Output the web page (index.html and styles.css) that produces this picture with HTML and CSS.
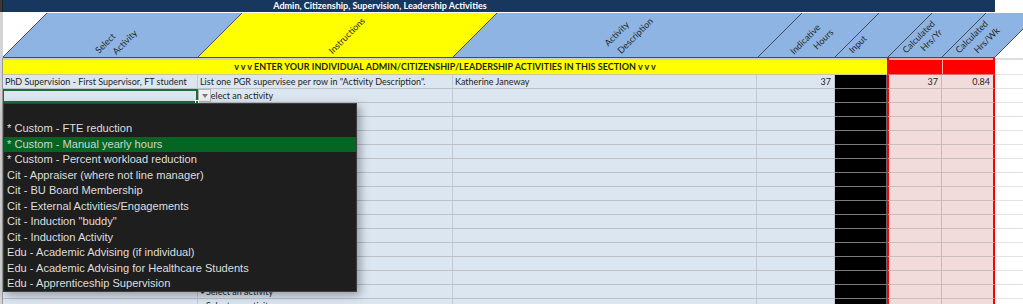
FILE: index.html
```html
<!DOCTYPE html>
<html>
<head>
<meta charset="utf-8">
<link rel="stylesheet" href="styles.css">
</head>
<body>
<div class="sheet">
  <div class="titlebar">
    <div class="gut dark"></div>
    <div class="title">Admin, Citizenship, Supervision, Leadership Activities</div>
    <div class="title-rest"></div>
    <div class="blank"></div>
  </div>

  <svg class="header" width="1023" height="46" viewBox="0 0 1023 46">
    <rect class="gutfill" x="0" y="0" width="3" height="46"/>
    <polygon class="blue" points="3,45 198,45 242,1 47,1"/>
    <polygon class="yellow" points="198,45 453,45 497,1 242,1"/>
    <polygon class="blue" points="453,45 995,45 1039,1 497,1"/>
    <line class="edge" x1="3" y1="45" x2="47" y2="1"/>
    <line class="edge" x1="198" y1="45" x2="242" y2="1"/>
    <line class="edge" x1="453" y1="45" x2="497" y2="1"/>
    <line class="edge" x1="758" y1="45" x2="802" y2="1"/>
    <line class="edge" x1="835" y1="45" x2="879" y2="1"/>
    <line class="edge" x1="888" y1="45" x2="932" y2="1"/>
    <line class="edge" x1="942" y1="45" x2="986" y2="1"/>
    <line class="edge" x1="995" y1="45" x2="1039" y2="1"/>
    <line class="base" x1="3" y1="45.5" x2="995" y2="45.5"/>
    <text class="ht" x="105" y="31" transform="rotate(-45 105 31)">Select</text>
    <text class="ht" x="124.5" y="30" transform="rotate(-45 124.5 30)">Activity</text>
    <text class="ht" x="346.5" y="23.5" transform="rotate(-45 346.5 23.5)">Instructions</text>
    <text class="ht" x="616.5" y="21.5" transform="rotate(-45 616.5 21.5)">Activity</text>
    <text class="ht" x="635" y="23.5" transform="rotate(-45 635 23.5)">Description</text>
    <text class="ht" x="805" y="27" transform="rotate(-45 805 27)">Indicative</text>
    <text class="ht" x="823" y="27" transform="rotate(-45 823 27)">Hours</text>
    <text class="ht" x="857.5" y="32" transform="rotate(-45 857.5 32)">Input</text>
    <text class="ht" x="918.5" y="24.5" transform="rotate(-45 918.5 24.5)">Calculated</text>
    <text class="ht" x="931" y="28" transform="rotate(-45 931 28)">Hrs/Yr</text>
    <text class="ht" x="971.5" y="24.5" transform="rotate(-45 971.5 24.5)">Calculated</text>
    <text class="ht" x="986.5" y="28" transform="rotate(-45 986.5 28)">Hrs/Wk</text>
  </svg>

  <div class="sep">
    <div class="gut"></div>
    <div class="sep-main"></div>
    <div class="sep-red f"></div>
    <div class="sep-red g"></div>
    <div class="sep-w"></div>
  </div>

  <div class="banner">
    <div class="gut"></div>
    <div class="banner-text">v v v ENTER YOUR INDIVIDUAL ADMIN/CITIZENSHIP/LEADERSHIP ACTIVITIES IN THIS SECTION v v v</div>
    <div class="redcell f"></div>
    <div class="redcell g gr"></div>
    <div class="w"></div>
  </div>

  <div class="row">
    <div class="gut"></div>
    <div class="c">PhD Supervision - First Supervisor, FT student</div>
    <div class="c">List one PGR supervisee per row in "Activity Description".</div>
    <div class="c">Katherine Janeway</div>
    <div class="c num">37</div>
    <div class="c e"></div>
    <div class="c p f num">37</div>
    <div class="c p g num">0.84</div>
    <div class="w"></div>
  </div>

  <div class="row">
    <div class="gut"></div>
    <div class="c sel"><span class="handle"></span></div>
    <div class="c bcol"><span class="ddbtn"><span class="tri"></span></span><span class="bul">•</span>Select an activity</div>
    <div class="c"></div>
    <div class="c"></div>
    <div class="c e"></div>
    <div class="c p f"></div>
    <div class="c p g"></div>
    <div class="w"></div>
  </div>

  <div class="row"><div class="gut"></div><div class="c"></div><div class="c"><span class="bul">•</span>Select an activity</div><div class="c"></div><div class="c"></div><div class="c e"></div><div class="c p f"></div><div class="c p g"></div><div class="w"></div></div>
  <div class="row"><div class="gut"></div><div class="c"></div><div class="c"><span class="bul">•</span>Select an activity</div><div class="c"></div><div class="c"></div><div class="c e"></div><div class="c p f"></div><div class="c p g"></div><div class="w"></div></div>
  <div class="row"><div class="gut"></div><div class="c"></div><div class="c"><span class="bul">•</span>Select an activity</div><div class="c"></div><div class="c"></div><div class="c e"></div><div class="c p f"></div><div class="c p g"></div><div class="w"></div></div>
  <div class="row"><div class="gut"></div><div class="c"></div><div class="c"><span class="bul">•</span>Select an activity</div><div class="c"></div><div class="c"></div><div class="c e"></div><div class="c p f"></div><div class="c p g"></div><div class="w"></div></div>
  <div class="row"><div class="gut"></div><div class="c"></div><div class="c"><span class="bul">•</span>Select an activity</div><div class="c"></div><div class="c"></div><div class="c e"></div><div class="c p f"></div><div class="c p g"></div><div class="w"></div></div>
  <div class="row"><div class="gut"></div><div class="c"></div><div class="c"><span class="bul">•</span>Select an activity</div><div class="c"></div><div class="c"></div><div class="c e"></div><div class="c p f"></div><div class="c p g"></div><div class="w"></div></div>
  <div class="row"><div class="gut"></div><div class="c"></div><div class="c"><span class="bul">•</span>Select an activity</div><div class="c"></div><div class="c"></div><div class="c e"></div><div class="c p f"></div><div class="c p g"></div><div class="w"></div></div>
  <div class="row"><div class="gut"></div><div class="c"></div><div class="c"><span class="bul">•</span>Select an activity</div><div class="c"></div><div class="c"></div><div class="c e"></div><div class="c p f"></div><div class="c p g"></div><div class="w"></div></div>
  <div class="row"><div class="gut"></div><div class="c"></div><div class="c"><span class="bul">•</span>Select an activity</div><div class="c"></div><div class="c"></div><div class="c e"></div><div class="c p f"></div><div class="c p g"></div><div class="w"></div></div>
  <div class="row"><div class="gut"></div><div class="c"></div><div class="c"><span class="bul">•</span>Select an activity</div><div class="c"></div><div class="c"></div><div class="c e"></div><div class="c p f"></div><div class="c p g"></div><div class="w"></div></div>
  <div class="row"><div class="gut"></div><div class="c"></div><div class="c"><span class="bul">•</span>Select an activity</div><div class="c"></div><div class="c"></div><div class="c e"></div><div class="c p f"></div><div class="c p g"></div><div class="w"></div></div>
  <div class="row"><div class="gut"></div><div class="c"></div><div class="c"><span class="bul">•</span>Select an activity</div><div class="c"></div><div class="c"></div><div class="c e"></div><div class="c p f"></div><div class="c p g"></div><div class="w"></div></div>
  <div class="row"><div class="gut"></div><div class="c"></div><div class="c"><span class="bul">•</span>Select an activity</div><div class="c"></div><div class="c"></div><div class="c e"></div><div class="c p f"></div><div class="c p g"></div><div class="w"></div></div>
  <div class="row"><div class="gut"></div><div class="c"></div><div class="c"><span class="bul">•</span>Select an activity</div><div class="c"></div><div class="c"></div><div class="c e"></div><div class="c p f"></div><div class="c p g"></div><div class="w"></div></div>
  <div class="row"><div class="gut"></div><div class="c"></div><div class="c"><span class="bul">•</span>Select an activity</div><div class="c"></div><div class="c"></div><div class="c e"></div><div class="c p f"></div><div class="c p g"></div><div class="w"></div></div>

  <ul class="dropdown">
    <li>* Custom - FTE reduction</li>
    <li class="hl">* Custom - Manual yearly hours</li>
    <li>* Custom - Percent workload reduction</li>
    <li>Cit - Appraiser (where not line manager)</li>
    <li>Cit - BU Board Membership</li>
    <li>Cit - External Activities/Engagements</li>
    <li>Cit - Induction "buddy"</li>
    <li>Cit - Induction Activity</li>
    <li>Edu - Academic Advising (if individual)</li>
    <li>Edu - Academic Advising for Healthcare Students</li>
    <li>Edu - Apprenticeship Supervision</li>
  </ul>
</div>
</body>
</html>
```

FILE: styles.css
```css
* { box-sizing: border-box; }
html, body { margin: 0; padding: 0; background: #fff; }
body { width: 1023px; height: 304px; overflow: hidden; }

.sheet {
  position: relative;
  width: 1023px;
  height: 304px;
  overflow: hidden;
  font-family: Lato, "Liberation Sans", sans-serif;
}

.titlebar, .sep, .banner, .row {
  display: grid;
  grid-template-columns: 3px 195px 255px 304px 78px 52px 55px 53px 28px;
}

.gut { background: #d4d4d4; border-right: 1px solid #9a9a9a; }
.gut.dark { background: #3a3a3a; border-right: 1px solid #222; }

.titlebar { height: 12px; }
.title {
  grid-column: 2 / 5;
  background: #17375e;
  color: #fff;
  font-weight: 700;
  font-size: 9px;
  line-height: 12px;
  text-align: center;
  white-space: nowrap;
}
.title-rest { grid-column: 5 / 9; background: #17375e; }
.blank { background: #fff; }

.header { display: block; }
.gutfill { fill: #d4d4d4; }
.blue { fill: #8db4e2; }
.yellow { fill: #ffff00; }
.edge { stroke: #3d3d3d; stroke-width: 0.9; }
.base { stroke: #4a4a4a; stroke-width: 1; }
.ht {
  font-family: Lato, "Liberation Sans", sans-serif;
  font-size: 9px;
  fill: #262626;
  text-anchor: middle;
  dominant-baseline: central;
}

.sep { height: 2px; }
.sep-main { grid-column: 2 / 7; background: #cfcfcf; }
.sep-red { background: #f0a7a7; }
.sep-w { background: #dedede; }

.banner { height: 15px; }
.banner-text {
  grid-column: 2 / 7;
  background: #ffff00;
  border-bottom: 1px solid #c9c99a;
  font-weight: 700;
  font-size: 9px;
  line-height: 14px;
  color: #1f1f1f;
  text-align: center;
  white-space: nowrap;
}
.redcell { background: #ff0000; border-bottom: 1px solid #e06b6b; }
.redcell.gr { box-shadow: inset 1px 0 0 #f4b5b5; }
.w { background: #fff; border-bottom: 1px solid #e3e3e3; }

.row { height: 14px; }
.c {
  position: relative;
  background: #dce6f1;
  border-right: 1px solid #c4cad1;
  border-bottom: 1px solid #bcc1c8;
  font-size: 9px;
  line-height: 13px;
  color: #1e1e1e;
  padding: 0 2px;
  white-space: nowrap;
  overflow: visible;
}
.bul { display: inline-block; width: 6px; }
.num { text-align: right; padding-right: 3px; }
.e { background: #000; border-bottom-color: #7c7c7c; border-right-color: #666; }
.p { background: #f2dcdb; border-bottom-color: #cbbdbd; border-right-color: #c8b8b8; }
.f { border-left: 2px solid #ff0000; }
.g { border-right: 2px solid #ff0000; }
.p.g { border-right: 2px solid #ff0000; }

.sel {
  border: 2px solid #1e6b3c;
  border-left-width: 1px;
  z-index: 2;
}
.handle {
  position: absolute;
  right: -3px;
  bottom: -3px;
  width: 4px;
  height: 4px;
  background: #1e6b3c;
  border: 1px solid #fff;
}
.bcol { overflow: hidden; }
.ddbtn {
  position: absolute;
  left: 0;
  top: 0;
  width: 13px;
  height: 13px;
  background: #efefef;
  border: 1px solid #b5b5b5;
  display: flex;
  align-items: center;
  justify-content: center;
}
.tri {
  width: 0;
  height: 0;
  border-left: 3.5px solid transparent;
  border-right: 3.5px solid transparent;
  border-top: 4px solid #7a7a7a;
}

.dropdown {
  position: absolute;
  left: 3px;
  top: 103px;
  width: 354px;
  height: 189px;
  margin: 0;
  padding: 17px 0 0 0;
  list-style: none;
  background: #1e1e1e;
  border: 1px solid #3d3d3d;
  box-shadow: 3px 3px 9px rgba(0, 0, 0, 0.35);
  font-family: "Liberation Sans", Arial, sans-serif;
  font-size: 11.1px;
  color: #dedede;
  z-index: 5;
}
.dropdown li {
  height: 15.5px;
  line-height: 15.5px;
  padding-left: 3px;
  white-space: nowrap;
}
.dropdown li.hl { background: #056624; color: #cdd6cf; }
```
